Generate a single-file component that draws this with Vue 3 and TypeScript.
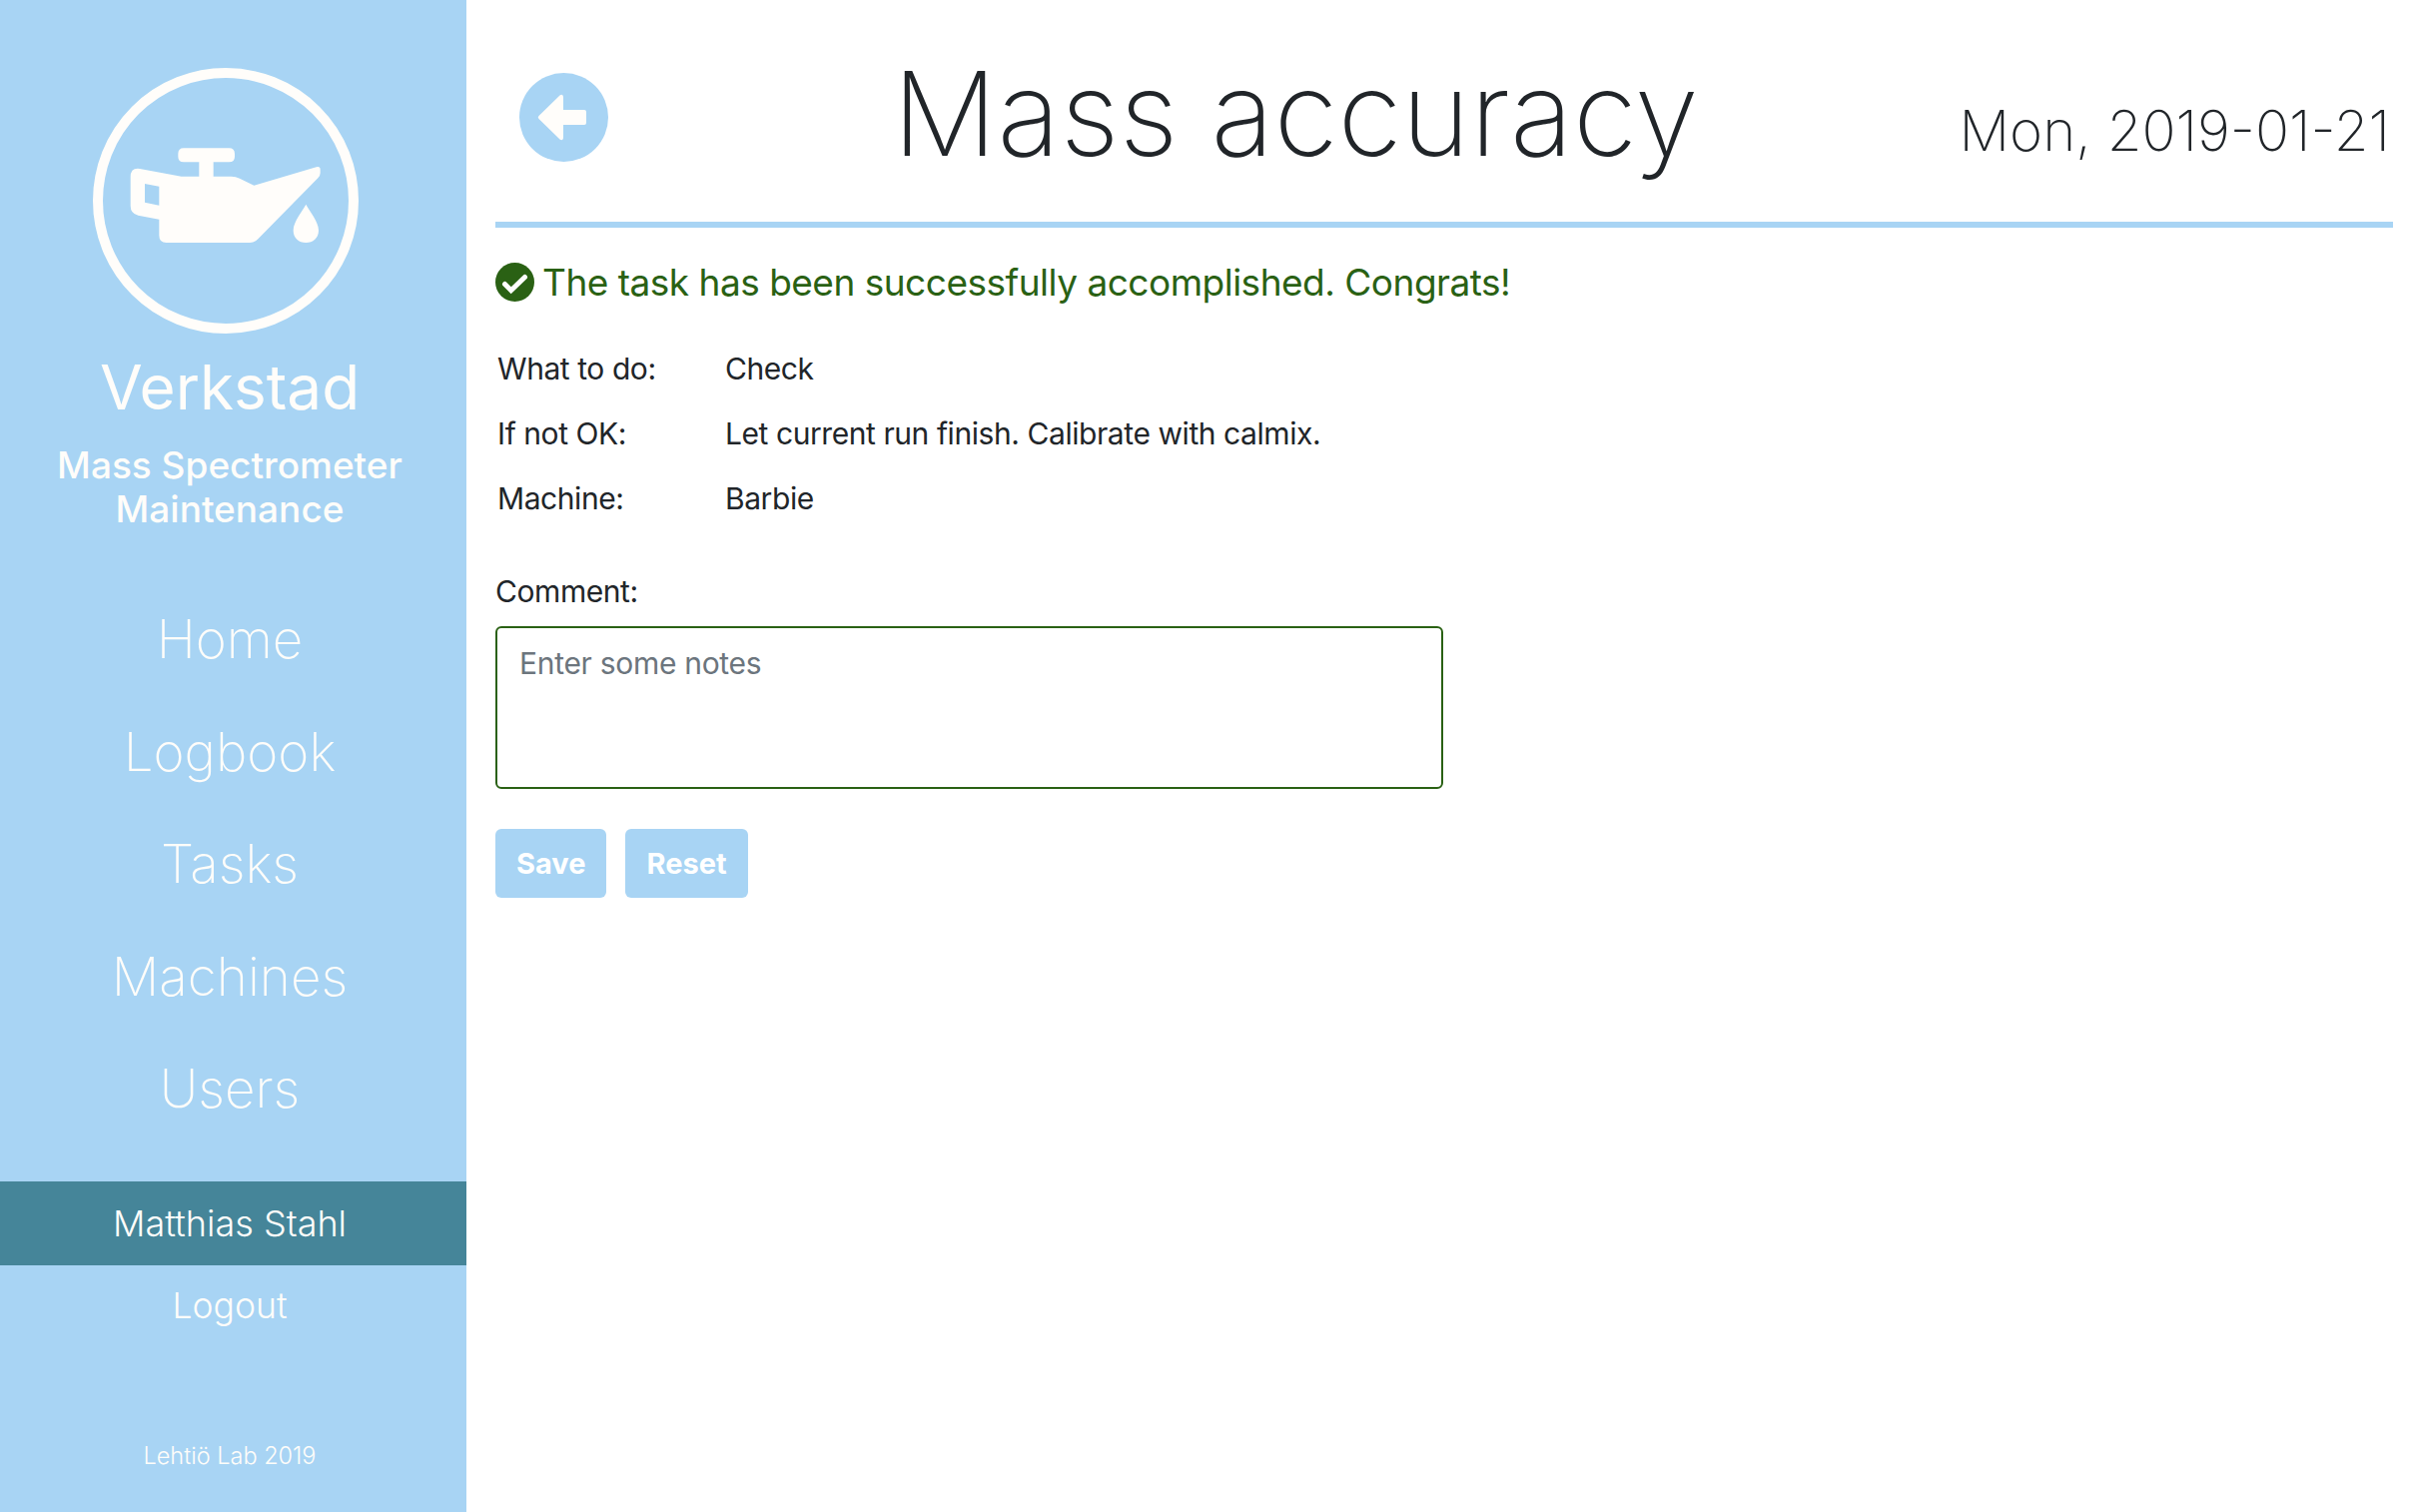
<script setup lang="ts">
const navItems: string[] = ['Home', 'Logbook', 'Tasks', 'Machines', 'Users']
const rows: { label: string; value: string }[] = [
  { label: 'What to do:', value: 'Check' },
  { label: 'If not OK:', value: 'Let current run finish. Calibrate with calmix.' },
  { label: 'Machine:', value: 'Barbie' },
]
</script>

<template>
  <div class="page">
    <aside class="sidebar">
      <svg class="logo" width="266" height="266" viewBox="0 0 266 266">
        <circle cx="133" cy="133" r="128" fill="none" stroke="#fffdfa" stroke-width="10" />
        <g transform="translate(17 52) scale(0.33333)" fill="#fffdfa">
          <path fill-rule="evenodd" d="M90 147 L215 170 L268 170 L268 127 L222 127 Q205 127 205 110 L205 102 Q205 85 222 85 L358 85 Q375 85 375 102 L375 110 Q375 127 358 127 L311 127 L311 170 L365 170 Q378 170 390 176 L433 197 L620 142 Q632 139 632 150 L632 160 Q632 168 625 175 L445 358 Q435 369 420 369 L170 369 Q148 369 148 347 L148 299 L85 287 Q62 282 62 258 L62 172 Q62 143 90 147 Z M105 192 L105 248 L148 257 L148 200 Z" />
          <path d="M589 254 C600 275 627 305 627 332 C627 355 610 369 589 369 C568 369 551 355 551 332 C551 305 578 275 589 254 Z" />
        </g>
      </svg>
      <h1 class="brand">Verkstad</h1>
      <p class="subtitle">Mass Spectrometer<br />Maintenance</p>
      <nav class="nav">
        <a v-for="item in navItems" :key="item" class="nav-item">{{ item }}</a>
      </nav>
      <div class="user">Matthias Stahl</div>
      <a class="logout">Logout</a>
      <div class="footer">Lehtiö Lab 2019</div>
    </aside>

    <main class="main">
      <header class="header">
        <button class="back" aria-label="Back">
          <svg width="89" height="89" viewBox="0 0 89 89">
            <circle cx="44.5" cy="44.5" r="44.5" fill="#a8d4f4" />
            <path d="M19.5 43 L40.5 22.5 Q42.5 21 43.5 22.5 Q44 23 44 25 L44 37 L65 37 Q67 37 67 39 L67 50 Q67 52 65 52 L44 52 L44 64 Q44 66 43.5 66.5 Q42.5 68 40.5 66.5 L19.5 46 Q18 44.5 19.5 43 Z" fill="#fffdfa" />
          </svg>
        </button>
        <h2 class="title">Mass accuracy</h2>
        <div class="date">Mon, 2019-01-21</div>
      </header>
      <div class="rule"></div>

      <div class="success">
        <svg width="39" height="39" viewBox="0 0 39 39">
          <circle cx="19.5" cy="19.5" r="19.5" fill="#2a6114" />
          <path d="M9.5 21.5 L15.7 27.7 L29.5 14.5" fill="none" stroke="#fff" stroke-width="5" stroke-linecap="round" />
        </svg>
        <span>The task has been successfully accomplished. Congrats!</span>
      </div>

      <div class="details">
        <div v-for="row in rows" :key="row.label" class="row">
          <span class="label">{{ row.label }}</span>
          <span>{{ row.value }}</span>
        </div>
      </div>

      <label class="comment-label" for="comment">Comment:</label>
      <textarea id="comment" class="comment" placeholder="Enter some notes"></textarea>

      <div class="actions">
        <button class="btn">Save</button>
        <button class="btn">Reset</button>
      </div>
    </main>
  </div>
</template>

<style scoped>
.page {
  display: flex;
  width: 2418px;
  height: 1514px;
  overflow: hidden;
  background: #fff;
  font-family: Inter, "Liberation Sans", sans-serif;
  color: #212529;
}
.sidebar {
  width: 467px;
  flex: none;
  display: flex;
  flex-direction: column;
  align-items: center;
  background: #a8d4f4;
  color: #fffdfa;
  font-family: Inter, "Liberation Sans", sans-serif;
  padding: 68px 7px 0 0;
  box-sizing: border-box;
}
.logo {
  display: block;
  flex: none;
  margin-left: -8px;
}
.brand {
  margin: 18px 0 0;
  font-size: 62px;
  line-height: 72px;
  font-weight: 400;
}
.subtitle {
  margin: 20px 0 0;
  font-size: 37px;
  line-height: 44px;
  font-weight: 500;
  text-align: center;
}
.nav {
  margin-top: 52px;
  display: flex;
  flex-direction: column;
  align-items: center;
}
.nav-item {
  height: 112.5px;
  line-height: 112.5px;
  font-size: 53px;
  font-weight: 200;
}
.user {
  margin: 36px -7px 0 0;
  align-self: stretch;
  height: 84px;
  line-height: 84px;
  background: #458599;
  font-size: 36px;
  font-weight: 300;
  text-align: center;
  padding-right: 7px;
}
.logout {
  margin-top: 19px;
  height: 44px;
  line-height: 44px;
  font-size: 35.5px;
  font-weight: 300;
}
.footer {
  margin-top: 113px;
  font-size: 23.5px;
  line-height: 30px;
  font-weight: 300;
}
.main {
  flex: 1;
  min-width: 0;
  padding: 0 22px 0 29px;
  box-sizing: border-box;
}
.header {
  height: 222px;
  display: flex;
  align-items: flex-start;
}
.back {
  margin: 73px 0 0 24px;
  padding: 0;
  border: 0;
  background: none;
  line-height: 0;
  flex: none;
}
.title {
  margin: 44px 0 0;
  flex: 1;
  text-align: center;
  font-size: 117px;
  line-height: 140px;
  font-weight: 200;
  padding-left: 24px;
  color: #212529;
}
.date {
  margin: 94px 3px 0 0;
  flex: none;
  font-size: 56.4px;
  line-height: 74px;
  font-weight: 200;
  white-space: nowrap;
}
.rule {
  height: 6px;
  background: #a8d4f4;
}
.success {
  margin-top: 35px;
  display: flex;
  align-items: center;
  gap: 8px;
  font-size: 37px;
  line-height: 38px;
  letter-spacing: -0.5px;
  color: #2a6114;
}
.details {
  margin-top: 35px;
  padding-left: 2px;
  font-size: 30px;
  letter-spacing: -0.43px;
}
.row {
  display: flex;
  height: 65px;
  line-height: 65px;
}
.label {
  width: 228px;
  flex: none;
}
.comment-label {
  display: block;
  margin-top: 40px;
  font-size: 30px;
  line-height: 40px;
  letter-spacing: -0.43px;
}
.comment {
  display: block;
  margin-top: 15px;
  width: 949px;
  height: 163px;
  box-sizing: border-box;
  border: 2px solid #2a6114;
  border-radius: 6px;
  padding: 15px 22px;
  font-family: inherit;
  font-size: 30px;
  line-height: 40px;
  letter-spacing: -0.3px;
  resize: none;
  outline: none;
}
.comment::placeholder {
  color: #6c757d;
  opacity: 1;
}
.actions {
  margin-top: 40px;
  display: flex;
  gap: 19px;
}
.btn {
  height: 69px;
  padding: 0 21px;
  border: 0;
  border-radius: 6px;
  background: #a8d4f4;
  color: #fff;
  font-family: inherit;
  font-size: 29px;
  font-weight: 700;
}
</style>
